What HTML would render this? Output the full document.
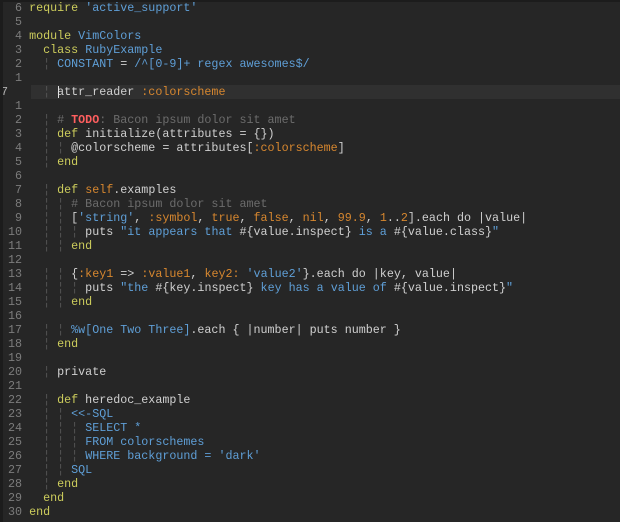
<!DOCTYPE html>
<html><head><meta charset="utf-8"><style>
html,body{margin:0;padding:0;background:#1c1c1c;}
#w{position:absolute;left:3px;top:2px;width:617px;height:520px;background:#262626;overflow:hidden;}
#code{margin:0;position:absolute;left:-2px;top:-1px;width:640px;font-family:"Liberation Mono",monospace;font-size:11.7px;line-height:14px;color:#d0d0d0;}
.l{height:14px;white-space:pre;position:relative;}
.n{color:#7c7c7c;}
.k{color:#cccc5c;}
.b{color:#5f9fd7;}
.o{color:#d7872f;}
.c{color:#6c6c6c;}
.g{color:#555;}
.t{color:#ff5f5f;font-weight:bold;}
.cur .hl{position:absolute;left:30px;right:0;top:0;bottom:0;background:#303030;}
.cs{position:relative;}
.cursor{position:absolute;left:57px;top:1px;width:1px;height:12px;background:#e0e0e0;}
</style></head><body><div id="w"><div id="code"><div class="l"><span class="n">  6 </span><span class="k">require</span> <span class="b">'active_support'</span></div><div class="l"><span class="n">  5 </span></div><div class="l"><span class="n">  4 </span><span class="k">module</span> <span class="b">VimColors</span></div><div class="l"><span class="n">  3 </span>  <span class="k">class</span> <span class="b">RubyExample</span></div><div class="l"><span class="n">  2 </span>  <span class="g">¦</span> <span class="b">CONSTANT</span> = <span class="b">/^[0-9]+ regex awesomes$/</span></div><div class="l"><span class="n">  1 </span></div><div class="l cur"><span class="hl"></span><span class="cs"><span class="n" style="color:#b0b0b0">7   </span>  <span class="g">¦</span> attr_reader <span class="o">:colorscheme</span></span><span class="cursor"></span></div><div class="l"><span class="n">  1 </span></div><div class="l"><span class="n">  2 </span>  <span class="g">¦</span> <span class="c"># <span class="t">TODO</span>: Bacon ipsum dolor sit amet</span></div><div class="l"><span class="n">  3 </span>  <span class="g">¦</span> <span class="k">def</span> initialize(attributes = {})</div><div class="l"><span class="n">  4 </span>  <span class="g">¦ ¦</span> @colorscheme = attributes[<span class="o">:colorscheme</span>]</div><div class="l"><span class="n">  5 </span>  <span class="g">¦</span> <span class="k">end</span></div><div class="l"><span class="n">  6 </span></div><div class="l"><span class="n">  7 </span>  <span class="g">¦</span> <span class="k">def</span> <span class="o">self</span>.examples</div><div class="l"><span class="n">  8 </span>  <span class="g">¦ ¦</span> <span class="c"># Bacon ipsum dolor sit amet</span></div><div class="l"><span class="n">  9 </span>  <span class="g">¦ ¦</span> [<span class="b">'string'</span>, <span class="o">:symbol</span>, <span class="o">true</span>, <span class="o">false</span>, <span class="o">nil</span>, <span class="o">99.9</span>, <span class="o">1</span>..<span class="o">2</span>].each do |value|</div><div class="l"><span class="n"> 10 </span>  <span class="g">¦ ¦ ¦</span> puts <span class="b">"it appears that </span>#{value.inspect}<span class="b"> is a </span>#{value.class}<span class="b">"</span></div><div class="l"><span class="n"> 11 </span>  <span class="g">¦ ¦</span> <span class="k">end</span></div><div class="l"><span class="n"> 12 </span></div><div class="l"><span class="n"> 13 </span>  <span class="g">¦ ¦</span> {<span class="o">:key1</span> =&gt; <span class="o">:value1</span>, <span class="o">key2:</span> <span class="b">'value2'</span>}.each do |key, value|</div><div class="l"><span class="n"> 14 </span>  <span class="g">¦ ¦ ¦</span> puts <span class="b">"the </span>#{key.inspect}<span class="b"> key has a value of </span>#{value.inspect}<span class="b">"</span></div><div class="l"><span class="n"> 15 </span>  <span class="g">¦ ¦</span> <span class="k">end</span></div><div class="l"><span class="n"> 16 </span></div><div class="l"><span class="n"> 17 </span>  <span class="g">¦ ¦</span> <span class="b">%w[One Two Three]</span>.each { |number| puts number }</div><div class="l"><span class="n"> 18 </span>  <span class="g">¦</span> <span class="k">end</span></div><div class="l"><span class="n"> 19 </span></div><div class="l"><span class="n"> 20 </span>  <span class="g">¦</span> private</div><div class="l"><span class="n"> 21 </span></div><div class="l"><span class="n"> 22 </span>  <span class="g">¦</span> <span class="k">def</span> heredoc_example</div><div class="l"><span class="n"> 23 </span>  <span class="g">¦ ¦</span> <span class="b">&lt;&lt;-SQL</span></div><div class="l"><span class="n"> 24 </span>  <span class="g">¦ ¦ ¦</span> <span class="b">SELECT *</span></div><div class="l"><span class="n"> 25 </span>  <span class="g">¦ ¦ ¦</span> <span class="b">FROM colorschemes</span></div><div class="l"><span class="n"> 26 </span>  <span class="g">¦ ¦ ¦</span> <span class="b">WHERE background = 'dark'</span></div><div class="l"><span class="n"> 27 </span>  <span class="g">¦ ¦</span> <span class="b">SQL</span></div><div class="l"><span class="n"> 28 </span>  <span class="g">¦</span> <span class="k">end</span></div><div class="l"><span class="n"> 29 </span>  <span class="k">end</span></div><div class="l"><span class="n"> 30 </span><span class="k">end</span></div></div></div></body></html>
